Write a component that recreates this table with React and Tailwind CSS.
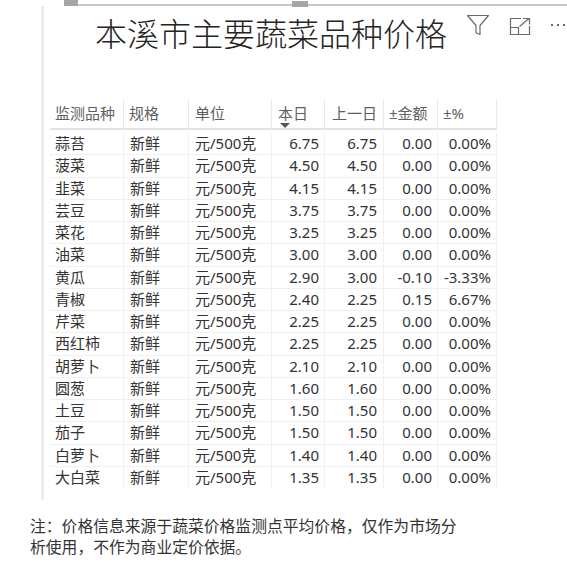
import React from "react";

const rows = [
  ["蒜苔", "6.75", "6.75", "0.00", "0.00%"],
  ["菠菜", "4.50", "4.50", "0.00", "0.00%"],
  ["韭菜", "4.15", "4.15", "0.00", "0.00%"],
  ["芸豆", "3.75", "3.75", "0.00", "0.00%"],
  ["菜花", "3.25", "3.25", "0.00", "0.00%"],
  ["油菜", "3.00", "3.00", "0.00", "0.00%"],
  ["黄瓜", "2.90", "3.00", "-0.10", "-3.33%"],
  ["青椒", "2.40", "2.25", "0.15", "6.67%"],
  ["芹菜", "2.25", "2.25", "0.00", "0.00%"],
  ["西红柿", "2.25", "2.25", "0.00", "0.00%"],
  ["胡萝卜", "2.10", "2.10", "0.00", "0.00%"],
  ["圆葱", "1.60", "1.60", "0.00", "0.00%"],
  ["土豆", "1.50", "1.50", "0.00", "0.00%"],
  ["茄子", "1.50", "1.50", "0.00", "0.00%"],
  ["白萝卜", "1.40", "1.40", "0.00", "0.00%"],
  ["大白菜", "1.35", "1.35", "0.00", "0.00%"],
];

const font = { fontFamily: '"Noto Sans", "Noto Sans CJK SC", sans-serif' };

function FilterIcon() {
  return (
    <svg width="24" height="22" viewBox="0 0 24 22" fill="none" stroke="#6b6b6b" strokeWidth="1.2" strokeLinejoin="round">
      <path d="M1.5 1.5 H22.5 L14 11.5 V20.5 L10 18.8 V11.5 Z" />
    </svg>
  );
}

function ExpandIcon() {
  return (
    <svg width="22" height="19" viewBox="0 0 22 19" fill="none" stroke="#6b6b6b" strokeWidth="1.2">
      <path d="M12 1.5 H1.5 V17.5 H20.5 V9" />
      <path d="M1.5 10.5 H9.5 V17.5" />
      <path d="M10.5 9.5 L20 1.5" />
      <path d="M14 1.5 H20.5 V7.5" />
    </svg>
  );
}

const cols = ["w-[74px]", "w-[65px]", "w-[83px]", "w-[53px]", "w-[59px]", "w-[54px]", "w-[59px]"];

export default function App() {
  return (
    <div className="relative w-[567px] h-[571px] bg-white overflow-hidden" style={font}>
      {/* selection frame top line and handles */}
      <div className="absolute left-[70px] right-0 top-[4px] h-[2px] bg-[#c8c8c8]" />
      <div className="absolute left-[64px] top-0 w-[14px] h-[6px] bg-[#a6a6a6]" />
      <div className="absolute left-[292px] top-[1px] w-[16px] h-[6px] bg-[#a6a6a6]" />

      {/* visual header icons */}
      <div className="absolute left-[466px] top-[14px] flex items-start">
        <FilterIcon />
        <div className="ml-[19px] mt-[3px]">
          <ExpandIcon />
        </div>
        <div className="ml-[20px] mt-[10px] flex gap-[4px]">
          <span className="block w-[2px] h-[2px] bg-[#6b6b6b]" />
          <span className="block w-[2px] h-[2px] bg-[#6b6b6b]" />
          <span className="block w-[2px] h-[2px] bg-[#6b6b6b]" />
        </div>
      </div>

      <div className="pt-[6px] pl-[41px]">
        <div className="h-[494px] border-l-[3px] border-[#ebebeb] pl-[6px]">
          <div className="pt-[9px] pl-[45px] text-[32px] leading-[38px] text-[#252423] font-light">
            本溪市主要蔬菜品种价格
          </div>

          <div className="mt-[47px] w-[447px] text-[15px] text-[#333333]">
            {/* header */}
            <div className="flex h-[30px] border-b-2 border-[#e3e3e3] text-[#605e5c]">
              <div className={`${cols[0]} border-r border-[#e8e8e8] pl-[5px] pt-[2px] leading-[22px]`}>监测品种</div>
              <div className={`${cols[1]} border-r border-[#e8e8e8] pl-[5px] pt-[2px] leading-[22px]`}>规格</div>
              <div className={`${cols[2]} border-r border-[#e8e8e8] pl-[6px] pt-[2px] leading-[22px]`}>单位</div>
              <div className={`${cols[3]} border-r border-[#e8e8e8] pl-[6px] pt-[2px] leading-[22px]`}>
                <div>本日</div>
                <div className="ml-[2px] -mt-[1px] w-0 h-0 border-l-[5px] border-r-[5px] border-t-[5px] border-l-transparent border-r-transparent border-t-[#555555]" />
              </div>
              <div className={`${cols[4]} border-r border-[#e8e8e8] pl-[7px] pt-[2px] leading-[22px]`}>上一日</div>
              <div className={`${cols[5]} border-r border-[#e8e8e8] pl-[5px] pt-[2px] leading-[22px]`}>±金额</div>
              <div className={`${cols[6]} border-r border-[#e8e8e8] pl-[5px] pt-[2px] leading-[22px]`}>±%</div>
            </div>
            <div className="h-[3px]" />
            {rows.map((r, i) => (
              <div key={i} className={`flex h-[22.25px] leading-[21px] ${i < rows.length - 1 ? "border-b border-[#f0f0f0]" : ""}`}>
                <div className={`${cols[0]} border-r border-[#f0f0f0] pl-[5px] whitespace-nowrap`}>{r[0]}</div>
                <div className={`${cols[1]} border-r border-[#f0f0f0] pl-[6px]`}>新鲜</div>
                <div className={`${cols[2]} border-r border-[#f0f0f0] pl-[6px]`}>元/500克</div>
                <div className={`${cols[3]} border-r border-[#f0f0f0] pr-[5px] text-right`}>{r[1]}</div>
                <div className={`${cols[4]} border-r border-[#f0f0f0] pr-[6px] text-right`}>{r[2]}</div>
                <div className={`${cols[5]} border-r border-[#f0f0f0] pr-[5px] text-right`}>{r[3]}</div>
                <div className={`${cols[6]} border-r border-[#f0f0f0] pr-[5px] text-right`}>{r[4]}</div>
              </div>
            ))}
          </div>
        </div>
      </div>

      <div className="mt-[16px] pl-[30px] w-[470px] text-[15.8px] leading-[21px] text-[#333333]">
        注：价格信息来源于蔬菜价格监测点平均价格，仅作为市场分析使用，不作为商业定价依据。
      </div>
    </div>
  );
}
